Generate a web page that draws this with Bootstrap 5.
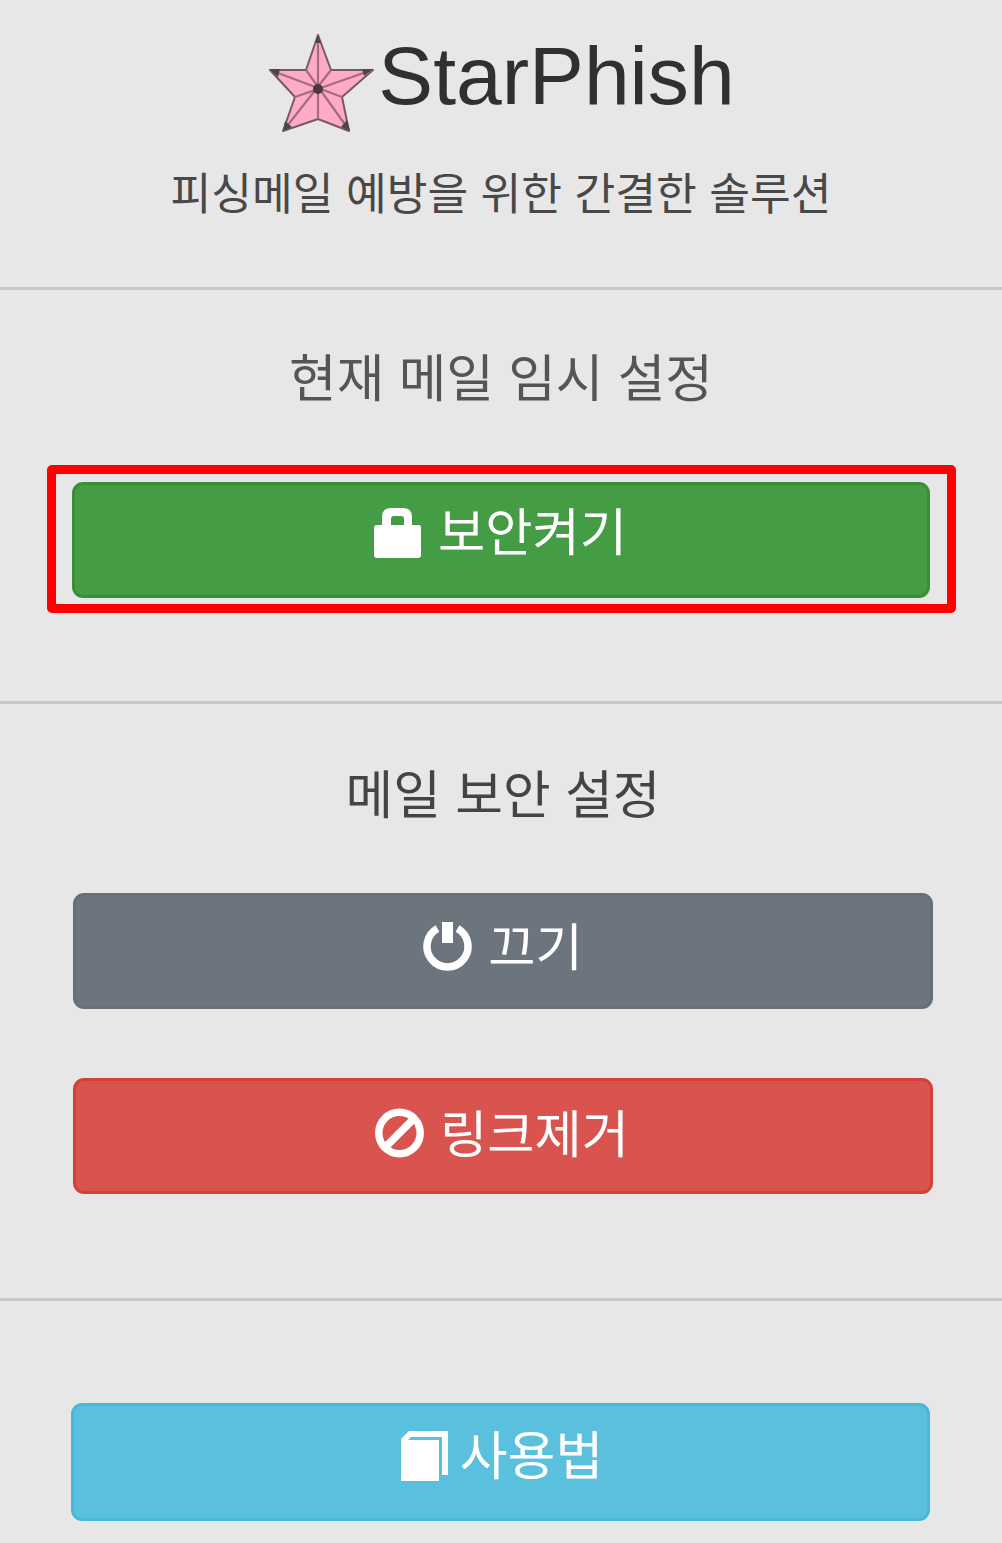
<!DOCTYPE html>
<html lang="ko">
<head>
<meta charset="utf-8">
<meta name="viewport" content="width=device-width, initial-scale=1">
<title>StarPhish</title>
<link href="https://cdn.jsdelivr.net/npm/bootstrap@5.3.0/dist/css/bootstrap.min.css" rel="stylesheet">
<style>
body{background:#e7e7e7;color:#333;font-family:"Noto Sans CJK KR","Noto Sans",sans-serif;height:1543px;overflow:hidden}
.sect{border-bottom:3px solid #c8c8c8}
.sect-brand{height:290px;padding-top:32px}
.sect-mail{height:414px;padding-top:49px}
.sect-level{height:597px;padding-top:52px}
.sect-help{padding:102px 72px 0 71px}
.brand-row{height:100px;padding-left:1px}
.brand-star{width:108px;height:100px}
.brand-name{font:400 82.2px/88px "Liberation Sans",Arial,sans-serif;color:#303030;margin-left:2px}
.tagline{font-size:44.3px;line-height:60px;margin-top:29px;color:#484848}
.title-mail{font-size:51.7px;line-height:72px;color:#555}
.title-level{font-size:51.8px;line-height:72px;color:#444;padding-left:4px}
.frame{margin:54px 46px 0 47px;height:148px;border:9px solid #f00;border-radius:5px;padding:8px 17px 0 16px}
.act{height:116px;border-width:3px;border-radius:11px;padding:0;color:#fff;font-size:51.4px;line-height:72px}
.act svg{flex:none;width:49px;height:51px}
.act-on{background:#449d44;border-color:#398f39;padding-top:8px;padding-right:2px}
.act-on svg{margin-top:14px}
.act-help svg{margin-top:13px}
.act-off{background:#6c757d;border-color:#646f78;padding-top:12px}
.act-off svg,.act-cut svg{margin-top:13px}
.act-cut{background:#d9534f;border-color:#d43f3a;padding-top:14px;padding-right:2px}
.act-help{background:#5bc0de;border-color:#46b8da;height:118px;padding-top:11px;font-size:52px;padding-left:2px}
.act-help span{margin-left:3px}
.stack{margin:65px 69px 0 73px;gap:69px}
</style>
</head>
<body>
<header class="sect sect-brand text-center">
  <div class="brand-row d-flex justify-content-center align-items-start">
    <svg class="brand-star" viewBox="0 0 108 100" aria-hidden="true">
      <path d="M50 3 63 38 105 38 74 65 81 99 50 87 15 99 27 65 2 38 38 38Z" fill="#ffabc6" stroke="#775966" stroke-width="2" stroke-linejoin="round"/>
      <path d="M50 3V87M104 38 27 65M81 98 38 38M16 98 63 38M2 38 74 65" fill="none" stroke="#a66b80" stroke-width="2.2"/>
      <path d="M47 11 50 2 53 11ZM94 37H105L96 44ZM12 37H1L10 45ZM17 89 15 99 24 95ZM79 88 82 99 73 95Z" fill="#4c454b"/>
      <circle cx="50" cy="57" r="5" fill="#49383f"/>
    </svg>
    <h1 class="brand-name mb-0">StarPhish</h1>
  </div>
  <p class="tagline mb-0">피싱메일 예방을 위한 간결한 솔루션</p>
</header>
<main>
  <section class="sect sect-mail">
    <h2 class="title-mail fw-normal text-center mb-0">현재 메일 임시 설정</h2>
    <div class="frame">
      <button type="button" class="btn act act-on w-100 d-flex justify-content-center align-items-start gap-3">
        <svg viewBox="0 0 49 51" fill="#fff"><path fill-rule="evenodd" d="M9 18V10Q9 1 18 1H30Q39 1 39 10V18H46Q48 18 48 21V48Q48 51 45 51H4Q1 51 1 48V21Q1 18 4 18ZM18 18H31V12Q31 9 28 9H21Q18 9 18 12Z"/></svg>
        <span>보안켜기</span>
      </button>
    </div>
  </section>
  <section class="sect sect-level">
    <h2 class="title-level fw-normal text-center mb-0">메일 보안 설정</h2>
    <div class="stack d-flex flex-column">
      <button type="button" class="btn act act-off w-100 d-flex justify-content-center align-items-start gap-3">
        <svg viewBox="0 0 49 51" fill="none" stroke="#fff"><path d="M14.5 7.5A20.5 20.5 0 1 0 34.5 7.5" stroke-width="7.5"/><path d="M24.5 1V22" stroke-width="11"/></svg>
        <span>끄기</span>
      </button>
      <button type="button" class="btn act act-cut w-100 d-flex justify-content-center align-items-start gap-3">
        <svg viewBox="0 0 49 51" fill="none" stroke="#fff" stroke-width="7.5"><circle cx="24.5" cy="25" r="20.7"/><path d="M39 10.5 10 39.5"/></svg>
        <span>링크제거</span>
      </button>
    </div>
  </section>
  <section class="sect-help">
    <button type="button" class="btn act act-help w-100 d-flex justify-content-center align-items-start gap-2">
      <svg viewBox="0 0 49 51" fill="#fff"><path d="M1 9 9 1H48V45H42V7H11L8 10H39V51H1Z"/></svg>
      <span>사용법</span>
    </button>
  </section>
</main>
<script src="https://cdn.jsdelivr.net/npm/bootstrap@5.3.0/dist/js/bootstrap.bundle.min.js"></script>
</body>
</html>
